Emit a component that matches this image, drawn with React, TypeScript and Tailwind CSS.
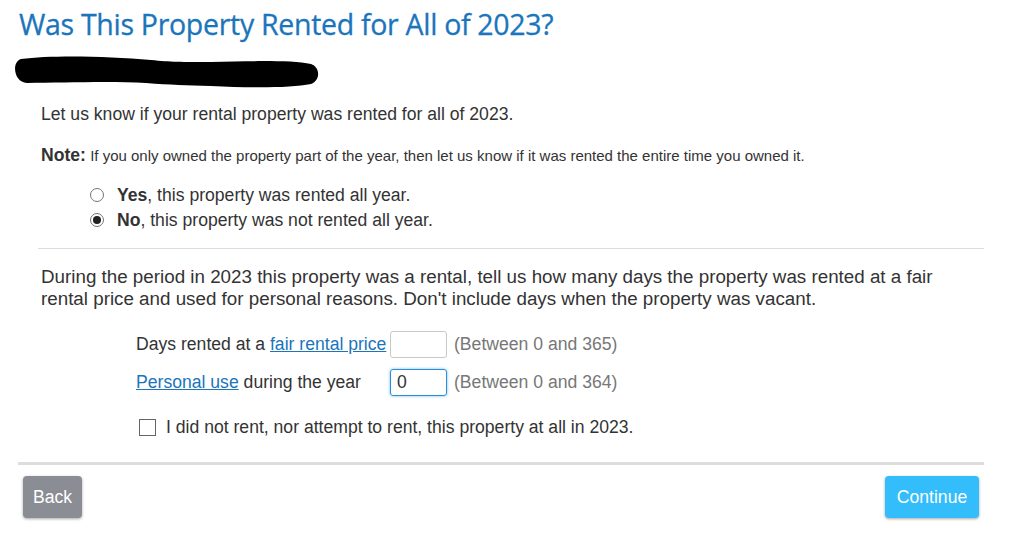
import React from "react";

const Radio = ({ checked }: { checked?: boolean }) => (
  <span className="inline-flex items-center justify-center w-[14px] h-[14px] rounded-full border border-[#767676] bg-white">
    {checked && <span className="w-[8px] h-[8px] rounded-full bg-[#222]" />}
  </span>
);

export default function App() {
  return (
    <div className="w-[1027px] h-[547px] bg-white text-[#333] font-['Liberation_Sans',Arial,sans-serif] overflow-hidden">
      <div className="pl-[19px] pt-[6px]">
        <h1 className="text-[28.5px] leading-[36px] text-[#1b75bb] font-medium font-['Open_Sans',sans-serif] tracking-[-0.3px] [-webkit-text-stroke:0.3px_#1b75bb]">
          Was This Property Rented for All of 2023?
        </h1>
      </div>
      <div className="pl-[11px] pt-[12px]">
        <svg width="310" height="36" viewBox="0 0 310 36">
          <path
            d="M10 5 C40 1 95 2 140 6 C160 8 170 8 200 8 C240 7 280 6 300 10 C309 13 310 26 300 30 C280 34 240 34 200 32 C175 31 160 31 135 29 C95 27 50 29 16 29 C3 29 0 8 10 5 Z"
            fill="#000"
          />
        </svg>
      </div>

      <div className="pl-[41px] pr-[43px]">
        <p className="mt-[14px] text-[17.6px] leading-[20px]">
          Let us know if your rental property was rented for all of 2023.
        </p>
        <p className="mt-[21px] text-[15px] leading-[20px]">
          <span className="font-bold text-[17.6px]">Note:</span> If you only
          owned the property part of the year, then let us know if it was rented
          the entire time you owned it.
        </p>
        <div className="mt-[19px] pl-[49px] flex flex-col gap-[5px] text-[17.6px] leading-[20px]">
          <div className="flex items-center gap-[13px]">
            <Radio />
            <span>
              <b>Yes</b>, this property was rented all year.
            </span>
          </div>
          <div className="flex items-center gap-[13px]">
            <Radio checked />
            <span>
              <b>No</b>, this property was not rented all year.
            </span>
          </div>
        </div>
      </div>

      <div className="ml-[38px] mr-[43px] mt-[18px] h-px bg-[#ddd]" />

      <div className="pl-[41px] pr-[60px]">
        <p className="mt-[17px] text-[18.8px] leading-[22px]">
          During the period in 2023 this property was a rental, tell us how many
          days the property was rented at a fair rental price and used for
          personal reasons. Don't include days when the property was vacant.
        </p>

        <div className="mt-[21px] pl-[95px] flex flex-col gap-[11px] text-[17.6px]">
          <div className="flex items-center">
            <span className="w-[254px]">
              Days rented at a{" "}
              <a className="text-[#1b75bb] underline">fair rental price</a>
            </span>
            <input
              className="w-[57px] h-[27px] border border-[#c8c8c8] rounded-[3px] px-[6px] outline-none"
              defaultValue=""
            />
            <span className="ml-[7px] text-[#777]">(Between 0 and 365)</span>
          </div>
          <div className="flex items-center">
            <span className="w-[254px]">
              <a className="text-[#1b75bb] underline">Personal use</a> during the
              year
            </span>
            <input
              className="w-[57px] h-[27px] border border-[#2a8fd6] rounded-[3px] px-[6px] outline-none shadow-[0_0_3px_#6bb8ee]"
              defaultValue="0"
            />
            <span className="ml-[7px] text-[#777]">(Between 0 and 364)</span>
          </div>
          <div className="flex items-center mt-[7px] pl-[3px]">
            <span className="w-[17px] h-[17px] border border-[#666] bg-white" />
            <span className="ml-[10px]">
              I did not rent, nor attempt to rent, this property at all in 2023.
            </span>
          </div>
        </div>
      </div>

      <div className="ml-[18px] mr-[43px] mt-[22px] h-[3px] bg-[#ddd]" />

      <div className="flex justify-between pl-[23px] pr-[48px] mt-[11px]">
        <button className="w-[59px] h-[42px] rounded-[4px] bg-[#8a8d93] text-white text-[17.6px] shadow-[0_1px_3px_rgba(0,0,0,0.35)]">
          Back
        </button>
        <button className="w-[94px] h-[42px] rounded-[4px] bg-[#33bdfb] text-white text-[17.6px] shadow-[0_1px_3px_rgba(0,0,0,0.35)]">
          Continue
        </button>
      </div>
    </div>
  );
}
